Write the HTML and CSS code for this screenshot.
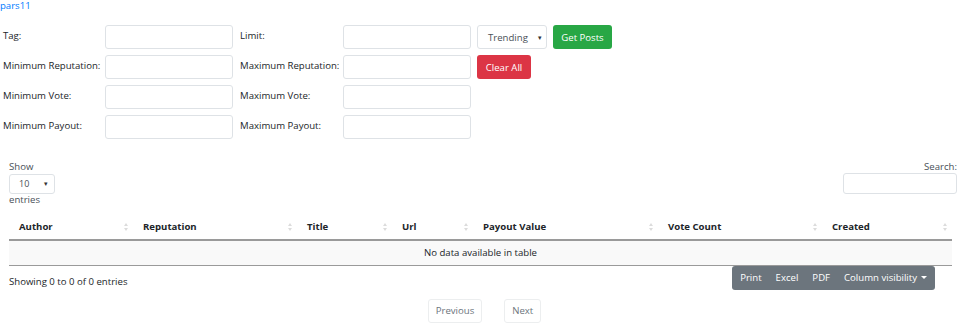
FILE: index.html
```html
<!DOCTYPE html>
<html>
<head>
<meta charset="utf-8">
<link rel="stylesheet" href="styles.css">
</head>
<body>
<a class="brand" href="#">pars11</a>
<div class="form">
  <div class="frow">
    <label class="lbl">Tag:</label><input class="inp" type="text">
    <label class="lbl lbl2">Limit:</label><input class="inp" type="text">
    <div class="sel sel-trend"><span>Trending</span><span class="arrow">&#9662;</span></div>
    <button class="btn btn-green">Get Posts</button>
  </div>
  <div class="frow">
    <label class="lbl">Minimum Reputation:</label><input class="inp" type="text">
    <label class="lbl lbl2">Maximum Reputation:</label><input class="inp" type="text">
    <button class="btn btn-red">Clear All</button>
  </div>
  <div class="frow">
    <label class="lbl">Minimum Vote:</label><input class="inp" type="text">
    <label class="lbl lbl2">Maximum Vote:</label><input class="inp" type="text">
  </div>
  <div class="frow">
    <label class="lbl">Minimum Payout:</label><input class="inp" type="text">
    <label class="lbl lbl2">Maximum Payout:</label><input class="inp" type="text">
  </div>
</div>
<div class="dt">
  <div class="dt-top">
    <div class="len">
      <div>Show</div>
      <div class="sel sel-len"><span>10</span><span class="arrow">&#9662;</span></div>
      <div>entries</div>
    </div>
    <div class="search">
      <div>Search:</div>
      <input class="inp search-inp" type="text">
    </div>
  </div>
  <table class="tbl">
    <colgroup>
      <col style="width:124px"><col style="width:164px"><col style="width:95px"><col style="width:81px"><col style="width:185px"><col style="width:164px"><col style="width:130px">
    </colgroup>
    <thead>
      <tr>
        <th>Author<span class="sort"></span></th>
        <th>Reputation<span class="sort"></span></th>
        <th>Title<span class="sort"></span></th>
        <th>Url<span class="sort"></span></th>
        <th>Payout Value<span class="sort"></span></th>
        <th>Vote Count<span class="sort"></span></th>
        <th>Created<span class="sort"></span></th>
      </tr>
    </thead>
    <tbody>
      <tr><td colspan="7" class="empty">No data available in table</td></tr>
    </tbody>
  </table>
  <div class="dt-bottom">
    <div class="info">Showing 0 to 0 of 0 entries</div>
    <div class="btn-group">
      <span class="gbtn">Print</span><span class="gbtn">Excel</span><span class="gbtn">PDF</span><span class="gbtn">Column visibility<span class="caret"></span></span>
    </div>
  </div>
  <div class="pager">
    <span class="pbtn">Previous</span><span class="pbtn">Next</span>
  </div>
</div>
</body>
</html>
```
FILE: styles.css
```css
* { box-sizing: border-box; }
body {
  margin: 0;
  font-family: "Open Sans", "Noto Sans", sans-serif;
  font-size: 9.6px;
  color: #212529;
  background: #fff;
  white-space: nowrap;
}
.brand {
  display: block;
  color: #007bff;
  text-decoration: none;
  line-height: 11px;
  height: 11px;
}
.form {
  margin-top: 14px;
  display: flex;
  flex-direction: column;
  gap: 6px;
}
.frow {
  display: flex;
  align-items: center;
  height: 24px;
}
.lbl {
  width: 105px;
  padding-left: 3px;
  margin-top: -3px;
}
.lbl2 {
  width: 103px;
  margin-left: 7px;
  padding-left: 0;
}
.inp {
  width: 128px;
  height: 24px;
  border: 1px solid #dee2e6;
  border-radius: 3px;
  background: #fff;
  outline: none;
}
.sel {
  display: flex;
  align-items: center;
  justify-content: space-between;
  border: 1px solid #dee2e6;
  border-radius: 3px;
  color: #495057;
}
.arrow { font-size: 7px; color: #333; }
.sel-trend {
  width: 70px;
  height: 24px;
  margin-left: 6px;
  padding: 0 4px 0 10px;
}
.btn {
  height: 24px;
  border: none;
  border-radius: 3px;
  color: #fff;
  font-family: inherit;
  font-size: 9.6px;
  padding: 0;
  white-space: nowrap;
}
.btn-green { background: #28a745; margin-left: 6px; width: 59px; }
.btn-red { background: #dc3545; margin-left: 6px; width: 54px; }
.dt { padding: 0 3px 0 9px; }
.dt-top {
  margin-top: 22px;
  display: flex;
  justify-content: space-between;
  color: #495057;
}
.len div, .search div { line-height: 12px; }
.sel-len {
  width: 46px;
  height: 20px;
  margin: 1px 0 0;
  padding: 0 6px 0 9px;
  font-size: 9px;
}
.search { text-align: right; }
.search-inp {
  width: 114px;
  height: 21px;
  margin-top: 0;
}
.tbl {
  margin-top: 8px;
  width: 943px;
  table-layout: fixed;
  border-collapse: collapse;
}
.tbl th {
  text-align: left;
  font-weight: bold;
  padding: 0 10px;
  height: 26px;
  border-bottom: 2px solid #9a9a9a;
  position: relative;
}
.sort {
  position: absolute;
  right: 6px;
  top: 9px;
  width: 3px;
  height: 8px;
}
.sort::before, .sort::after {
  content: "";
  position: absolute;
  left: 0;
  border-left: 2px solid transparent;
  border-right: 2px solid transparent;
}
.sort::before { top: 0; border-bottom: 3px solid #dcdcdc; }
.sort::after { bottom: 0; border-top: 3px solid #dcdcdc; }
.empty {
  text-align: center;
  background: #f9f9f9;
  height: 25px;
  border-bottom: 1px solid #9a9a9a;
  color: #212529;
}
.dt-bottom {
  display: flex;
  justify-content: space-between;
  align-items: flex-start;
  padding-right: 22px;
}
.info { margin-top: 9px; color: #212529; }
.btn-group {
  display: flex;
  background: #6c757d;
  border-radius: 3px;
  height: 24px;
  align-items: center;
  padding: 0 1px;
}
.gbtn {
  color: #fff;
  padding: 0 7px;
}
.caret {
  display: inline-block;
  margin-left: 4px;
  vertical-align: 2px;
  border-left: 3px solid transparent;
  border-right: 3px solid transparent;
  border-top: 3px solid #fff;
}
.pager {
  display: flex;
  justify-content: center;
  gap: 22px;
  margin-top: 9px;
  padding-left: 3px;
}
.pbtn {
  height: 24px;
  line-height: 22px;
  border: 1px solid #eceeef;
  border-radius: 3px;
  padding: 0 7px;
  color: #6c757d;
}
```
